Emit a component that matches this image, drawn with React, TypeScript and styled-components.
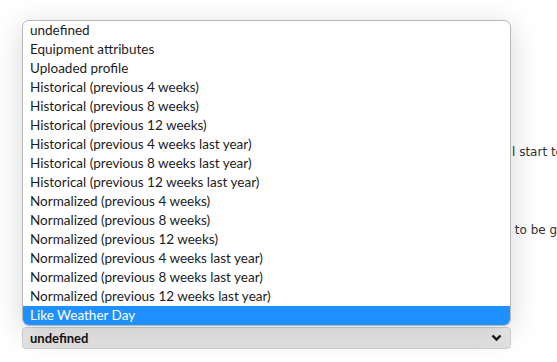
import { createGlobalStyle, styled } from 'styled-components';

const GlobalStyle = createGlobalStyle`
  html, body {
    margin: 0;
    padding: 0;
    background: #ffffff;
    overflow: hidden;
  }
  #root {
    width: 557px;
    height: 362px;
    position: relative;
    overflow: hidden;
  }
`;

const options = [
  'undefined',
  'Equipment attributes',
  'Uploaded profile',
  'Historical (previous 4 weeks)',
  'Historical (previous 8 weeks)',
  'Historical (previous 12 weeks)',
  'Historical (previous 4 weeks last year)',
  'Historical (previous 8 weeks last year)',
  'Historical (previous 12 weeks last year)',
  'Normalized (previous 4 weeks)',
  'Normalized (previous 8 weeks)',
  'Normalized (previous 12 weeks)',
  'Normalized (previous 4 weeks last year)',
  'Normalized (previous 8 weeks last year)',
  'Normalized (previous 12 weeks last year)',
  'Like Weather Day',
];

const Page = styled.div`
  display: flex;
  flex-direction: column;
  padding: 0 0 0 22px;
  font-family: 'DejaVu Sans', sans-serif;
  font-size: 12px;
  color: #333;
`;

const TextLine = styled.div<{ $top: number }>`
  display: flex;
  margin-top: ${({ $top }) => $top}px;
  white-space: nowrap;
  line-height: 18px;
`;

// part of the description that sits under the open list
const Covered = styled.span<{ $width: number }>`
  flex: none;
  width: ${({ $width }) => $width}px;
`;

const Select = styled.div`
  margin-top: 88px;
  width: 489px;
  height: 22px;
  box-sizing: border-box;
  display: flex;
  align-items: center;
  justify-content: space-between;
  padding: 0 8px 0 7px;
  border: 1px solid #cfcfd4;
  border-radius: 4px;
  background: linear-gradient(#eeeeee, #e2e2e2);
  font-family: 'Lato', sans-serif;
  font-weight: 700;
  font-size: 13px;
  color: #111;
`;

const Popup = styled.ul`
  position: absolute;
  left: 22px;
  top: 20px;
  width: 489px;
  box-sizing: border-box;
  margin: 0;
  padding: 0;
  list-style: none;
  background: #fff;
  border: 1px solid #b9b9b9;
  border-radius: 7px;
  overflow: hidden;
  box-shadow: 0 6px 30px rgba(0, 0, 0, 0.17);
  font-family: 'Lato', sans-serif;
  font-size: 13.5px;
  color: #1c1c1c;
`;

const Option = styled.li<{ $selected?: boolean }>`
  height: 19px;
  line-height: 18px;
  padding: 0 7px;
  white-space: nowrap;
  background: ${({ $selected }) => ($selected ? '#1e90ff' : 'transparent')};
  color: ${({ $selected }) => ($selected ? '#fff' : '#1c1c1c')};
`;

const Chevron = () => (
  <svg width="11" height="8" viewBox="0 0 11 8">
    <path d="M1.5 1.5 L5.5 5.5 L9.5 1.5" fill="none" stroke="#111" strokeWidth="2.4" />
  </svg>
);

export default function App() {
  return (
    <>
      <GlobalStyle />
      <Page>
        <TextLine $top={143}>
          <Covered $width={490} />
          <span>l start to be computed</span>
        </TextLine>
        <TextLine $top={60}>
          <Covered $width={489} />
          <span>&nbsp;to be generated</span>
        </TextLine>
        <Select>
          <span>undefined</span>
          <Chevron />
        </Select>
      </Page>
      <Popup>
        {options.map((o, i) => (
          <Option key={o} $selected={i === options.length - 1}>
            {o}
          </Option>
        ))}
      </Popup>
    </>
  );
}
